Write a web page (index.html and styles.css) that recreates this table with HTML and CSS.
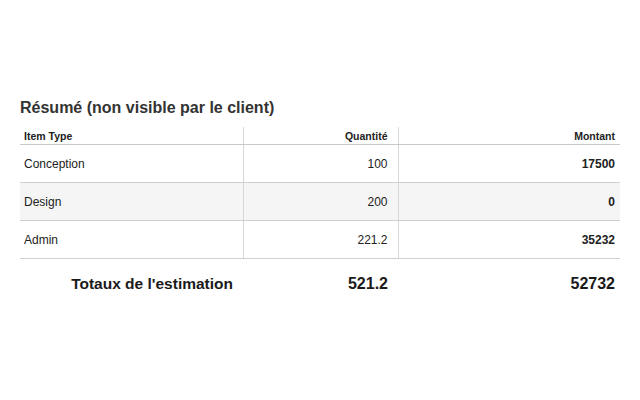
FILE: index.html
```html
<!DOCTYPE html>
<html lang="fr">
<head>
<meta charset="utf-8">
<title>Résumé</title>
<link rel="stylesheet" href="styles.css">
</head>
<body>
<main class="summary">
  <h2 class="summary-title">Résumé (non visible par le client)</h2>
  <table class="summary-table">
    <colgroup>
      <col class="col-type">
      <col class="col-qty">
      <col class="col-amount">
    </colgroup>
    <thead>
      <tr>
        <th class="c-type">Item Type</th>
        <th class="c-qty">Quantité</th>
        <th class="c-amount">Montant</th>
      </tr>
    </thead>
    <tbody>
      <tr>
        <td class="c-type">Conception</td>
        <td class="c-qty">100</td>
        <td class="c-amount">17500</td>
      </tr>
      <tr class="alt">
        <td class="c-type">Design</td>
        <td class="c-qty">200</td>
        <td class="c-amount">0</td>
      </tr>
      <tr>
        <td class="c-type">Admin</td>
        <td class="c-qty">221.2</td>
        <td class="c-amount">35232</td>
      </tr>
    </tbody>
    <tfoot>
      <tr>
        <td class="t-label">Totaux de l'estimation</td>
        <td class="t-qty">521.2</td>
        <td class="t-amount">52732</td>
      </tr>
    </tfoot>
  </table>
</main>
</body>
</html>
```

FILE: styles.css
```css
html, body {
  margin: 0;
  padding: 0;
  background: #ffffff;
}

body {
  font-family: "Liberation Sans", Arial, Helvetica, sans-serif;
  color: #222222;
}

.summary {
  padding: 99px 20px 0 20px;
  width: 600px;
}

.summary-title {
  margin: 0 0 10px 0;
  font-size: 16px;
  line-height: 18px;
  font-weight: bold;
  color: #333333;
}

.summary-table {
  width: 600px;
  border-collapse: collapse;
  table-layout: fixed;
}

.col-type { width: 223px; }
.col-qty { width: 155px; }
.col-amount { width: 222px; }

.summary-table th {
  font-size: 10.5px;
  font-weight: bold;
  line-height: 12px;
  height: 15px;
  padding: 0 0 2px 0;
  vertical-align: bottom;
  border-bottom: 1px solid #c8c8c8;
  color: #222222;
}

.summary-table tbody td {
  font-size: 12px;
  line-height: 14px;
  height: 37px;
  padding: 0;
  vertical-align: middle;
  border-bottom: 1px solid #cfcfcf;
  color: #222222;
}

.summary-table thead .c-type,
.summary-table thead .c-qty,
.summary-table tbody .c-type,
.summary-table tbody .c-qty {
  border-right: 1px solid #d8d8d8;
}

.c-type {
  text-align: left;
  padding-left: 4px !important;
}

.c-qty {
  text-align: right;
  padding-right: 10px !important;
}

.c-amount {
  text-align: right;
  padding-right: 5px !important;
}

.summary-table tbody .c-amount {
  font-weight: bold;
}

.summary-table tbody tr.alt td {
  background: #f5f5f5;
}

.summary-table tfoot td {
  font-size: 16px;
  font-weight: bold;
  line-height: 18px;
  height: 50px;
  padding: 0;
  vertical-align: middle;
  color: #1a1a1a;
}

.t-label {
  text-align: right;
  padding-right: 10px !important;
  font-size: 15.5px !important;
}

.t-qty {
  text-align: right;
  padding-right: 10px !important;
}

.t-amount {
  text-align: right;
  padding-right: 5px !important;
}
```
